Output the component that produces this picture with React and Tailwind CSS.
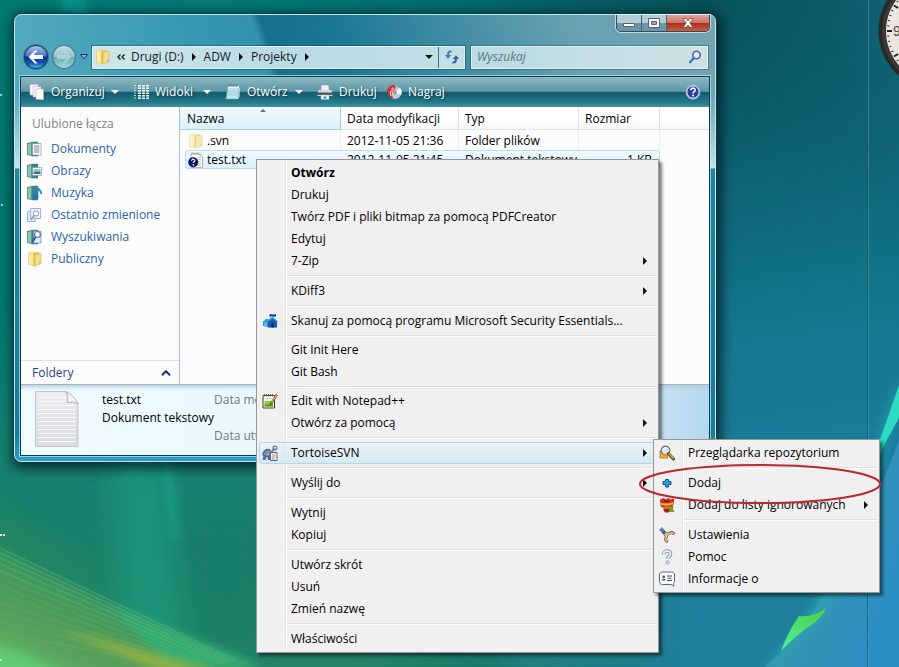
import React from "react";

function Wallpaper() {
  const rays = [0, 5, 10, 16, 23, 30, 38, 46, 55, 64, 74, 84];
  return (
    <svg
      className="absolute inset-0 h-full w-full"
      viewBox="0 0 899 667"
      preserveAspectRatio="xMidYMid slice"
      aria-hidden="true"
    >
      <defs>
        <linearGradient id="base" x1="0" y1="0" x2="1" y2="0">
          <stop offset="0" stopColor="#007a70" />
          <stop offset="0.25" stopColor="#007c78" />
          <stop offset="0.5" stopColor="#046d6c" />
          <stop offset="0.78" stopColor="#06525a" />
          <stop offset="0.92" stopColor="#0b5b6a" />
          <stop offset="1" stopColor="#146478" />
        </linearGradient>
        <linearGradient id="blueFade" gradientUnits="userSpaceOnUse" x1="700" y1="0" x2="790" y2="667">
          <stop offset="0" stopColor="#0a5a66" stopOpacity="0" />
          <stop offset="0.25" stopColor="#0e6575" stopOpacity="0.85" />
          <stop offset="0.5" stopColor="#14788f" />
          <stop offset="0.75" stopColor="#1d7f9e" />
          <stop offset="1" stopColor="#227f9c" />
        </linearGradient>
        <linearGradient id="lowLeft" x1="0" y1="0" x2="0" y2="1">
          <stop offset="0" stopColor="#138070" stopOpacity="0" />
          <stop offset="0.35" stopColor="#147f70" />
          <stop offset="1" stopColor="#248468" />
        </linearGradient>
        <linearGradient id="lowFade" x1="0" y1="0" x2="1" y2="0">
          <stop offset="0" stopColor="#fff" />
          <stop offset="0.5" stopColor="#fff" />
          <stop offset="1" stopColor="#000" />
        </linearGradient>
        <mask id="lowMask">
          <rect y="300" width="700" height="367" fill="url(#lowFade)" />
        </mask>
        <linearGradient id="hill" gradientUnits="userSpaceOnUse" x1="70" y1="560" x2="20" y2="667">
          <stop offset="0" stopColor="#2c9468" />
          <stop offset="0.4" stopColor="#4a9a5a" />
          <stop offset="0.75" stopColor="#5ba25c" />
          <stop offset="1" stopColor="#58bd68" />
        </linearGradient>
        <linearGradient id="corner" x1="0" y1="0" x2="1" y2="0.5">
          <stop offset="0" stopColor="#2391a8" />
          <stop offset="0.5" stopColor="#3a94b0" />
          <stop offset="1" stopColor="#2c8fc4" />
        </linearGradient>
        <linearGradient id="leaf" x1="0" y1="1" x2="0.6" y2="0">
          <stop offset="0" stopColor="#55f0a0" />
          <stop offset="1" stopColor="#4cd44c" />
        </linearGradient>
        <filter id="soft" filterUnits="userSpaceOnUse" x="-100" y="-100" width="1100" height="900">
          <feGaussianBlur stdDeviation="14" />
        </filter>
        <filter id="softer" filterUnits="userSpaceOnUse" x="-100" y="-100" width="1100" height="900">
          <feGaussianBlur stdDeviation="4" />
        </filter>
      </defs>
      <rect width="899" height="667" fill="url(#base)" />
      <rect x="560" width="339" height="667" fill="url(#blueFade)" />
      <rect x="500" y="430" width="160" height="300" fill="#1f7c94" filter="url(#soft)" />
      <rect y="300" width="700" height="367" fill="url(#lowLeft)" mask="url(#lowMask)" />
      <path d="M60 -10h24l6 40H64z" fill="#08a09a" opacity="0.6" filter="url(#softer)" />
      <path d="M110 440 L165 440 L185 667 L125 667Z" fill="#1fa386" opacity="0.55" filter="url(#soft)" />
      <path d="M162 440 L168 440 L178 540 L173 540Z" fill="#22b899" opacity="0.6" filter="url(#softer)" />
      <path d="M180 520 L260 520 L260 640 L200 640Z" fill="#167a68" opacity="0.6" filter="url(#soft)" />
      <path d="M-20 490 Q50 560 140 592 L-20 560Z" fill="#2a8a5a" opacity="0.6" filter="url(#soft)" />
      <path d="M-10 544 Q110 606 250 662 L265 680 L-10 680Z" fill="url(#hill)" filter="url(#softer)" />
      <path d="M110 606 Q180 634 262 667 L170 667Z" fill="#2fb57c" opacity="0.7" filter="url(#softer)" />
      {rays.map((d, i) => (
        <path
          key={d}
          d={`M0 ${548 + d} Q${110 - i * 2} ${600 + d * 0.6} ${235 - i * 3} ${660 + i}`}
          fill="none"
          stroke={i % 3 === 2 ? "#8ab963" : "#5cc48c"}
          strokeWidth="1"
          opacity={i < 5 ? 0.45 : 0.25}
        />
      ))}
      <path d="M60 630 Q150 650 215 672 L160 672Z" fill="#a8b83a" opacity="0.7" filter="url(#softer)" />
      <path d="M-10 645 Q40 655 70 680 L-10 680Z" fill="#66d074" opacity="0.7" filter="url(#softer)" />
      <path d="M899 440 Q840 600 765 667 L899 667Z" fill="url(#corner)" />
      <path d="M899 380 Q876 440 850 520 Q820 610 762 667 L780 667 Q850 600 872 510 Q880 455 899 412Z" fill="#27a3b4" opacity="0.6" filter="url(#softer)" />
      <path d="M899 385 L880 440 L876 462 Q886 440 899 418Z" fill="#2bdcc0" />
      <path d="M781 651 Q789 630 799 616 Q812 618 826 608 Q824 615 814 623 Q797 634 781 651Z" fill="url(#leaf)" />
      <path d="M867.5 0V667" stroke="#0b4f5c" opacity="0.6" />
      <path d="M868.5 0V667" stroke="#5aa6b4" opacity="0.5" />
      <circle cx="1" cy="95" r="1" fill="#d5e8e6" />
      <circle cx="2" cy="205" r="1" fill="#e8f4f3" />
      <path d="M0 535h5" stroke="#e8f4f3" strokeWidth="2" strokeDasharray="2 1" />
      <circle cx="1" cy="660" r="1" fill="#e8f4f3" />
    </svg>
  );
}

function ClockGadget() {
  const ticks = Array.from({ length: 60 }, (_, i) => i);
  return (
    <svg className="absolute top-0 right-0 h-24 w-6" viewBox="875 0 24 96" aria-label="Zegar">
      <circle cx="938" cy="31" r="60" fill="#0a3038" opacity="0.5" />
      <circle cx="938" cy="31" r="59" fill="#2a2725" />
      <circle cx="938" cy="31" r="56" fill="#3b3733" />
      <circle cx="938" cy="31" r="52" fill="#e9e7e0" />
      {ticks.map((i) => (
        <path
          key={i}
          d={i % 5 === 0 ? "M887 31h5" : "M887 31h2"}
          stroke="#222"
          strokeWidth={i % 5 === 0 ? 2 : 1}
          transform={`rotate(${i * 6} 938 31)`}
        />
      ))}
      <text x="893" y="36" fontSize="14" fontFamily="Liberation Sans, sans-serif" fill="#4a4a4a">
        9
      </text>
    </svg>
  );
}

/* ---------- small icons ---------- */

function FolderIcon({ pale }) {
  return (
    <svg className="size-4 shrink-0" viewBox="0 0 16 16" aria-hidden="true" opacity={pale ? 0.6 : 1}>
      <path d="M1.500 2 7 .8v14L1.500 13.500z" fill="#f9e795" stroke="#dcbf58" strokeWidth=".5" />
      <path d="M6.500 2 12 1v12l-5.500 2.200z" fill="#e3bd48" />
      <path d="M8 3 14 2.500v10L8 15.200z" fill="#f3dc84" stroke="#d3ae42" strokeWidth=".5" />
      <path d="M3 3.500v9" stroke="#fff6c8" strokeWidth="1.200" />
      <path d="M12.500 10.500l1.500 1-1.500 1.500z" fill="#7fa8cc" />
    </svg>
  );
}

function Cabinet({ children }) {
  return (
    <svg className="size-4 shrink-0" viewBox="0 0 16 16" aria-hidden="true">
      <path d="M0 2 5 .8v14.500L0 14z" fill="#5b9b8e" />
      <path d="M1 3l3-.6v11.500l-3-.7z" fill="#8cc2b0" />
      <path d="M5 .8h6v14.500H5z" fill="#3f7f86" />
      {children}
    </svg>
  );
}

const favouriteIcons = {
  docs: (
    <Cabinet>
      <path d="M5.500 2.500h8.500v11.500H5.500z" fill="#fff" stroke="#8194a8" strokeWidth=".7" />
      <path d="M7 5h5.500M7 7h5.500M7 9h5.500M7 11h5.500" stroke="#5c7391" strokeWidth=".9" />
    </Cabinet>
  ),
  pictures: (
    <Cabinet>
      <path d="M5.500 4.500h9v8h-9z" fill="#fff" stroke="#7d98a8" strokeWidth=".7" />
      <path d="M6.500 6h7v2.500h-7z" fill="#8fc8ec" />
      <path d="M6.500 8.500h7v2.500h-7z" fill="#2c7a86" />
    </Cabinet>
  ),
  music: (
    <Cabinet>
      <path d="M10.500 12V2.500c.8 2.500 4.300 2.500 3.800 6.500" fill="none" stroke="#1a86c8" strokeWidth="1.800" />
      <ellipse cx="8.500" cy="12.200" rx="2.900" ry="2.300" fill="#1a78be" />
    </Cabinet>
  ),
  recent: (
    <svg className="size-4 shrink-0" viewBox="0 0 16 16" aria-hidden="true">
      <path d="M.5 4.500h8v10h-8z" fill="#dbe6f8" stroke="#9fb6dc" />
      <path d="M3.500 1.500h10v10h-10z" fill="#eaf1fc" stroke="#9fb6dc" />
      <circle cx="9" cy="6.500" r="2.600" fill="#fff" stroke="#7f98ca" />
      <path d="M7.200 8.500 4 12.500" stroke="#7f98ca" strokeWidth="1.500" />
    </svg>
  ),
  searches: (
    <Cabinet>
      <path d="M6.500 2h7.500v12H6.500z" fill="#dfeaf6" stroke="#6a86a8" strokeWidth=".7" />
      <circle cx="10.500" cy="5.500" r="3" fill="#eef6ff" stroke="#5b7cac" strokeWidth="1.200" />
      <path d="M8.600 8 5.500 13" stroke="#34548a" strokeWidth="1.800" />
    </Cabinet>
  ),
  public: <FolderIcon />,
};

function TextFileIcon() {
  return (
    <svg className="size-4 shrink-0" viewBox="0 0 16 16" aria-hidden="true">
      <path d="M3 2h8l3.500 3v10.500H3z" fill="#fff" stroke="#98a0a8" strokeWidth=".8" />
      <path d="M4 .5v2M6 .5v2M8 .5v2M10 .5v2M12 1.500v2" stroke="#7c848c" strokeWidth=".8" />
      <path d="M9 5.500h4M9 7.500h4M10 9.500h3M10 11.500h3M9 13.500h4" stroke="#b4bac0" strokeWidth=".8" />
      <circle cx="5.200" cy="10.200" r="5" fill="#14146e" />
      <path d="M3.600 8.800c0-2.200 3.400-2 3.200 0-.1 1-1.500 1.100-1.500 2.300" fill="none" stroke="#fff" strokeWidth="1.200" />
      <circle cx="5.300" cy="12.900" r=".8" fill="#fff" />
    </svg>
  );
}

function OrganizeIcon() {
  return (
    <svg className="size-4 shrink-0" viewBox="0 0 16 16" aria-hidden="true">
      <path d="M1 .5h8v10.500H1z" fill="#fff" stroke="#b8bcc4" strokeWidth=".6" />
      <path d="M4 2.500h8v10.500H4z" fill="#f8f0f2" stroke="#b9a9b0" strokeWidth=".6" />
      <path d="M7 5h7.500v10.500H7z" fill="#fff" stroke="#b9a9b0" strokeWidth=".6" />
    </svg>
  );
}

function ViewsIcon() {
  return (
    <svg className="size-4 shrink-0" viewBox="0 0 16 16" aria-hidden="true">
      <path d="M2 1v14" stroke="#eef6f8" strokeWidth="1.500" strokeDasharray="1 1.500" />
      <path d="M6.500 1v14M10.500 1v14M14.500 1v14" stroke="#fff" strokeWidth="2.800" strokeDasharray="1.500 1" />
    </svg>
  );
}

function NotepadIcon() {
  return (
    <svg className="size-4 shrink-0" viewBox="0 0 16 16" aria-hidden="true">
      <path d="M3 2h11l-1 13H1z" fill="#bfe6ee" stroke="#6fa6b8" strokeWidth=".7" />
      <path d="M3 2h11v2H3z" fill="#f0fbfd" />
      <path d="M4 .5v2.500M6 .5v2.500M8 .5v2.500M10 .5v2.500M12 .5v2.500" stroke="#456c7a" strokeWidth=".8" />
      <path d="M3 7h9.500M3 9h9.500M2.500 11h9.500" stroke="#93c8d4" strokeWidth=".7" />
      <path d="M12 15l2-2 .3-9" fill="none" stroke="#fff" strokeWidth=".8" />
    </svg>
  );
}

function PrinterIcon() {
  return (
    <svg className="size-4 shrink-0" viewBox="0 0 16 16" aria-hidden="true">
      <path d="M4 1h8v6H4z" fill="#eef2f6" stroke="#8a96a2" strokeWidth=".6" />
      <path d="M1.500 6h13l1 6H.5z" fill="#d3dae0" />
      <path d="M1 8.500h14V11H1z" fill="#4e565f" />
      <path d="M4 11h8v4.500H4z" fill="#fff" stroke="#9aa4ae" strokeWidth=".6" />
      <path d="M6.500 12.500h3v2h-3z" fill="#3a80c0" />
    </svg>
  );
}

function BurnIcon() {
  return (
    <svg className="size-4 shrink-0" viewBox="0 0 16 16" aria-hidden="true">
      <circle cx="9" cy="8.500" r="6.500" fill="#c3cbd1" />
      <path d="M9 8.500 14 4a6.500 6.500 0 0 1 1 7z" fill="#f5f8fa" />
      <circle cx="9" cy="8.500" r="1.800" fill="#8b9ca8" />
      <path d="M7.500 14.500C-1 12 0 3 6 1.200c4.500-.8 4.500 3.800 1 5.600C5 8 5.500 11.500 7.500 14.500z" fill="#d8262c" />
      <path d="M5.500 4.500c1-1 2.500-.5 2 .6C7 6 5 6 4.500 8s0 3 1 4" fill="none" stroke="#fff" />
    </svg>
  );
}

function HelpIcon() {
  return (
    <svg className="size-4" viewBox="0 0 16 16" aria-hidden="true">
      <circle cx="8" cy="8" r="7.400" fill="#a9b6dc" />
      <circle cx="8" cy="8" r="6" fill="#2442a0" stroke="#e3e9f8" strokeWidth=".7" />
      <path d="M5.800 6.300c0-3 4.500-2.800 4.300 0-.1 1.400-2 1.500-2 3.200" fill="none" stroke="#fff" strokeWidth="1.600" />
      <circle cx="8.100" cy="11.600" r="1" fill="#fff" />
    </svg>
  );
}

function CaretDown({ className }) {
  return (
    <svg className={className} viewBox="0 0 8 4" aria-hidden="true">
      <path d="M0 0h8L4 4z" fill="currentColor" />
    </svg>
  );
}

function CaretRight() {
  return (
    <svg className="h-2 w-1 shrink-0" viewBox="0 0 4 8" aria-hidden="true">
      <path d="M0 0v8l4-4z" fill="#111" />
    </svg>
  );
}

/* ---------- menu icons ---------- */

const menuIcons = {
  security: (
    <svg className="size-4" viewBox="0 0 16 16" aria-hidden="true">
      <path d="M1 8.500 4.500 5.500 8 8v6.500L1 13z" fill="#2f94e4" />
      <path d="M6 7.500 10.500 4 15 8v6.500L6 14.500z" fill="#0f5cb0" />
      <path d="M5 7.500 10.500 3.500 15.500 8v1.500l-5-4L5.500 9z" fill="#3aa4ea" />
      <path d="M7.500 4V1.500c2-1.500 3 .8 6.500-.5v2.500c-3 1.200-4-1-5.500 0V4z" fill="#1d4c8c" />
      <path d="M9.500 14.500v-4h2.500v4z" fill="#092c66" />
      <path d="M2.500 9.500h2v3.500h-2z" fill="#68c6f6" />
    </svg>
  ),
  notepadpp: (
    <svg className="size-4" viewBox="0 0 16 16" aria-hidden="true">
      <path d="M1 2.500h11.500v12.500H1z" fill="#fdfdf4" stroke="#3c3c3c" />
      <path d="M2.500 1v2.500M4.500 1v2.500M6.500 1v2.500M8.500 1v2.500M10.500 1v2.500" stroke="#555" strokeWidth=".9" />
      <path d="M2.500 8h8.500v5.500H2.500z" fill="#8ad030" />
      <path d="M2.500 11.500h8.500v2H2.500z" fill="#4a9a1c" />
      <path d="M3 5.500h7" stroke="#b9b9a8" strokeWidth=".8" />
      <path d="M8.500 10 14 1.200l1.500 1L10 10.800z" fill="#eda43a" stroke="#6b4212" strokeWidth=".6" />
      <path d="M8.500 10l-.3 1.800 1.800-1z" fill="#222" />
    </svg>
  ),
  tortoise: (
    <svg className="size-4" viewBox="0 0 16 16" aria-hidden="true">
      <path d="M.8 9.500C1 3 9.500 2.500 11 9l-1 2.500H2z" fill="#56759f" stroke="#2d4468" strokeWidth=".8" />
      <path d="M3 5.800l3 1.200 3-1.200M6 7v4M1.500 9h9" stroke="#a4bedb" strokeWidth=".8" fill="none" />
      <path d="M10 8c.3-2 1-3 2-4" stroke="#6f87a6" strokeWidth="2.200" fill="none" />
      <circle cx="13" cy="3" r="2.200" fill="#8ba2be" stroke="#3c5270" strokeWidth=".6" />
      <circle cx="13.300" cy="2.600" r=".8" fill="#fff" />
      <path d="M2 11 .8 14.500h2.700l1-3.500M6 11.500v3h2v-3" fill="#5a7497" stroke="#35496a" strokeWidth=".5" />
      <path d="M8.500 7.500h6.500v8H8.500z" fill="#f6f4ee" stroke="#555" strokeWidth=".9" />
      <path d="M10 10h3.500M10 12h3.500M10 14h2.500" stroke="#777" strokeWidth=".8" />
    </svg>
  ),
  browse: (
    <svg className="size-4" viewBox="0 0 16 16" aria-hidden="true">
      <path d="M1 6h7.500v7H1z" fill="#f2b530" stroke="#9a6a10" strokeWidth=".7" />
      <circle cx="6.500" cy="5.500" r="4.300" fill="#d6e6fa" stroke="#66748a" strokeWidth="1.200" />
      <path d="M3.500 8.200h6L8 9.600H5z" fill="#f6c84c" />
      <path d="M4 5.500a2.500 2.500 0 0 1 3-2.500" stroke="#fff" strokeWidth="1.200" fill="none" />
      <path d="M9.500 8.500 14.500 14" stroke="#4e3408" strokeWidth="3" strokeLinecap="round" />
      <path d="M9.800 8.500 14.300 13.400" stroke="#e8b63c" strokeWidth="1.400" strokeLinecap="round" />
    </svg>
  ),
  add: (
    <svg className="size-4" viewBox="0 0 16 16" aria-hidden="true">
      <path d="M6.500 4.500h3v2h2.500v3H9.500v2.500h-3V9.500H4v-3h2.500z" fill="#32a0e0" stroke="#11568c" />
    </svg>
  ),
  ignore: (
    <svg className="size-4" viewBox="0 0 16 16" aria-hidden="true">
      <path d="M1 2.500 5 1l1.500 1.500L10 1l1 1.500 4-1v5.500l-1.500 1.500 1 2-3 1.500H6L2 9.500 1 7z" fill="#d42a1c" />
      <path d="M1 5.500c4 1.500 9 1.500 13.500-.5v2C10 9 5 9 1 7.500z" fill="#f9c03a" />
      <path d="M5 3.500h5v1.500H5z" fill="#7c120c" />
      <path d="M4 9.500h8v3H6z" fill="#e8701c" />
      <path d="M10 9.500h4v2.500l1.500 3H10z" fill="#6f9f2c" />
      <path d="M4 12h6v3.500H6z" fill="#b01c12" />
    </svg>
  ),
  settings: (
    <svg className="size-4" viewBox="0 0 16 16" aria-hidden="true">
      <path d="M1.500 1.500l4.500 5" stroke="#3d5784" strokeWidth="3.600" />
      <path d="M.5 3.500 3.500 .8M2.500 5 5 2.500" stroke="#b2c4e0" strokeWidth="1" />
      <path d="M5.500 6.500c2 1.500 2 3.500 1.300 5-.6 1.500.5 2.500 2.200 3.200M6 6.500c2 .8 3.500.5 5-.4 1.600-1 3.200-.4 4 1.400" fill="none" stroke="#6d5b38" strokeWidth="3" />
      <path d="M5.800 6.700c1.800 1.300 1.800 3.200 1.100 4.800-.5 1.200.4 2.200 1.800 2.800M6.300 6.600c1.800.8 3.300.5 4.800-.3 1.300-.8 2.700-.4 3.500.9" fill="none" stroke="#dfcda2" strokeWidth="1.500" />
    </svg>
  ),
  help: (
    <svg className="size-4" viewBox="0 0 16 16" aria-hidden="true">
      <path d="M4.500 5.500C4.500 .8 11.800 1 11.500 5c-.3 2.500-3 2.500-3 5" fill="none" stroke="#8090a8" strokeWidth="3.600" />
      <path d="M4.500 5.500C4.500 .8 11.800 1 11.500 5c-.3 2.500-3 2.500-3 5" fill="none" stroke="#e3ebf7" strokeWidth="2" />
      <circle cx="8.500" cy="13.500" r="1.600" fill="#e3ebf7" stroke="#8090a8" strokeWidth=".9" />
    </svg>
  ),
  about: (
    <svg className="size-4" viewBox="0 0 16 16" aria-hidden="true">
      <path d="M3.500 1h9c1.800 0 3 1.200 3 3v6.500c0 1-.5 1.700-1 2.200l.5 2.500L12 13.500H3.500c-1.800 0-3-1.200-3-3V4c0-1.800 1.200-3 3-3z" fill="#fbfcfd" stroke="#5b6673" />
      <path d="M2.800 9.500c0-2.500 3.800-2.500 3.800 0z" fill="#3f5068" />
      <circle cx="4.700" cy="5.800" r="1.300" fill="#3f5068" />
      <path d="M8 5h5M8.500 7.300h4M8 9.500h5" stroke="#3f4c5c" strokeWidth="1.100" />
    </svg>
  ),
};

/* ---------- context menus ---------- */

const mainMenu = [
  { label: "Otwórz", bold: true },
  { label: "Drukuj" },
  { label: "Twórz PDF i pliki bitmap za pomocą PDFCreator" },
  { label: "Edytuj" },
  { label: "7-Zip", sub: true },
  "line",
  { label: "KDiff3", sub: true },
  "line",
  { label: "Skanuj za pomocą programu Microsoft Security Essentials...", icon: "security" },
  "tight",
  { label: "Git Init Here" },
  { label: "Git Bash" },
  "tight",
  { label: "Edit with Notepad++", icon: "notepadpp" },
  { label: "Otwórz za pomocą", sub: true },
  "line",
  { label: "TortoiseSVN", icon: "tortoise", sub: true, active: true },
  "line",
  { label: "Wyślij do", sub: true },
  "line",
  { label: "Wytnij" },
  { label: "Kopiuj" },
  "line",
  { label: "Utwórz skrót" },
  { label: "Usuń" },
  { label: "Zmień nazwę" },
  "line",
  { label: "Właściwości" },
];

const svnMenu = [
  { label: "Przeglądarka repozytorium", icon: "browse" },
  "line",
  { label: "Dodaj", icon: "add" },
  { label: "Dodaj do listy ignorowanych", icon: "ignore", sub: true },
  "line",
  { label: "Ustawienia", icon: "settings" },
  { label: "Pomoc", icon: "help" },
  { label: "Informacje o", icon: "about" },
];

function Menu({ items, label, className }) {
  return (
    <div
      role="menu"
      aria-label={label}
      className={`absolute border border-[#979797] bg-[#f0f0f0] bg-[linear-gradient(90deg,transparent_28px,#e2e3e3_28px,#e2e3e3_29px,#fff_29px,#fff_30px,transparent_30px)] p-[2px] shadow-[3px_3px_3px_rgba(0,0,0,0.5)] ${className}`}
    >
      {items.map((item, i) =>
        typeof item === "string" ? (
          <div key={i} role="separator" className={`flex flex-col justify-center pl-7 ${item === "tight" ? "h-[7px]" : "h-2"}`}>
            <div className="h-[2px] border-t border-[#e0e0e0] bg-white" />
          </div>
        ) : (
          <button
            key={i}
            role="menuitem"
            type="button"
            className={`flex h-[22px] w-full items-center rounded-[3px] border pr-2 text-left ${
              item.active
                ? "border-[#aed9ea] bg-linear-to-b from-[#eaf3f8]/60 to-[#cfe9f5]/80"
                : "border-transparent"
            }`}
          >
            <span className="ml-[2px] flex w-[29px] shrink-0">{item.icon && menuIcons[item.icon]}</span>
            <span className={`grow whitespace-nowrap ${item.bold ? "font-bold" : ""}`}>{item.label}</span>
            {item.sub && <CaretRight />}
          </button>
        )
      )}
    </div>
  );
}

/* ---------- explorer window ---------- */

function CaptionButtons() {
  return (
    <div className="flex h-[17px] overflow-hidden rounded-b-[5px] border border-t-0 border-[#2b4f5e] shadow-[0_0_0_1px_rgba(255,255,255,0.6)]">
      <button type="button" aria-label="Minimalizuj" className="flex w-[25px] items-center justify-center border-r border-[#3c6474] bg-linear-to-b from-[#b4cdd5] from-50% to-[#6a98a6] to-50%">
        <svg className="h-3 w-4" viewBox="0 0 16 12" aria-hidden="true">
          <path d="M2.500 6.500h11v3h-11z" fill="#fff" stroke="#5b6570" />
        </svg>
      </button>
      <button type="button" aria-label="Maksymalizuj" className="flex w-[25px] items-center justify-center border-r border-[#3c6474] bg-linear-to-b from-[#b4cdd5] from-50% to-[#6a98a6] to-50%">
        <svg className="h-3 w-4" viewBox="0 0 16 12" aria-hidden="true">
          <path d="M2.500 1.500h11v9h-11z" fill="#fff" stroke="#5b6570" />
          <path d="M5.500 4.500h5v3h-5z" fill="#8fb0bb" stroke="#5b6570" />
        </svg>
      </button>
      <button type="button" aria-label="Zamknij" className="flex w-[42px] items-center justify-center bg-[linear-gradient(180deg,#dba59a_0%,#cf7263_48%,#a8301e_50%,#cc5a40_100%)]">
        <svg className="h-3 w-4" viewBox="0 0 16 12" aria-hidden="true">
          <path d="M3 1.500h3.200L8 4l1.800-2.500H13L9.800 6l3.200 4.500H9.800L8 8l-1.800 2.500H3L6.200 6z" fill="#fff" stroke="#6a4a4a" strokeWidth=".8" />
        </svg>
      </button>
    </div>
  );
}

function NavButtons() {
  return (
    <div className="flex items-center">
      <button type="button" aria-label="Wstecz">
        <svg className="size-7" viewBox="0 0 28 28" aria-hidden="true">
          <defs>
            <linearGradient id="back" x1="0" y1="0" x2="0" y2="1">
              <stop offset="0" stopColor="#b4c8ec" />
              <stop offset=".45" stopColor="#4a74c8" />
              <stop offset=".5" stopColor="#0c2f92" />
              <stop offset=".75" stopColor="#1650b4" />
              <stop offset="1" stopColor="#4cc4fa" />
            </linearGradient>
          </defs>
          <circle cx="14" cy="14" r="13" fill="#23526c" opacity=".5" />
          <circle cx="14" cy="14" r="11.500" fill="url(#back)" stroke="#1b2f66" />
          <path d="M13 7.500 6.500 14l6.500 6.500h2.500L11.500 16H21v-4h-9.500l4-4.500z" fill="#fff" />
        </svg>
      </button>
      <button type="button" aria-label="Dalej">
        <svg className="size-7" viewBox="0 0 28 28" aria-hidden="true">
          <defs>
            <linearGradient id="fwd" x1="0" y1="0" x2="0" y2="1">
              <stop offset="0" stopColor="#c4e0e6" />
              <stop offset=".48" stopColor="#94c2cc" />
              <stop offset=".5" stopColor="#66a8b4" />
              <stop offset="1" stopColor="#a4dae2" />
            </linearGradient>
          </defs>
          <circle cx="14" cy="14" r="11.500" fill="url(#fwd)" stroke="#44788a" strokeWidth="1.200" />
          <path d="M15 7.500l6.500 6.500-6.500 6.500h-2.500l4-4.500H7v-4h9.500l-4-4.500z" fill="#b4dade" opacity=".8" />
        </svg>
      </button>
      <button type="button" aria-label="Ostatnie strony" className="ml-[2px] w-2">
        <svg className="h-[6px] w-2" viewBox="0 0 8 6" aria-hidden="true">
          <path d="M.5 .5h7L4 5z" fill="#7fc0d4" stroke="#163a6c" />
        </svg>
      </button>
    </div>
  );
}

function AddressRow() {
  return (
    <div className="flex items-center px-[2px]">
      <NavButtons />
      <div className="ml-1 flex h-[23px] w-[373px] items-center border border-[#e2f2f5] bg-[linear-gradient(90deg,#cfe6ea,#b9dce5_50%,#c2dfe6)] pl-[2px] text-[#1a1a1a] shadow-[0_0_0_1px_rgba(20,70,90,0.5)]">
        <FolderIcon />
        <svg className="ml-[6px] h-[6px] w-2" viewBox="0 0 8 6" aria-hidden="true">
          <path d="M3.500 .5 1 3l2.500 2.500M7.500 .5 5 3l2.500 2.500" fill="none" stroke="#111" strokeWidth="1.300" />
        </svg>
        <button type="button" className="ml-[6px]">Drugi (D:)</button>
        <span className="mx-2"><CaretRight /></span>
        <button type="button">ADW</button>
        <span className="mx-2"><CaretRight /></span>
        <button type="button">Projekty</button>
        <span className="mx-2"><CaretRight /></span>
        <button type="button" aria-label="Poprzednie lokalizacje" className="ml-auto flex h-full w-5 items-center justify-center border-r border-[#3f7488]">
          <CaretDown className="h-1 w-2" />
        </button>
        <button type="button" aria-label="Odśwież" className="flex w-[25px] justify-center">
          <svg className="size-4" viewBox="0 0 16 16" aria-hidden="true">
            <path d="M7.500 2.500C5 2 4 3.500 4 6.500" fill="none" stroke="#3f7cc0" strokeWidth="2" />
            <path d="M.8 6h6.400L4 9.800z" fill="#3f7cc0" />
            <path d="M8.500 13.500c2.500.5 3.500-1 3.500-4" fill="none" stroke="#2f5c9c" strokeWidth="2" />
            <path d="M8.800 10h6.400L12 6.200z" fill="#2f5c9c" />
          </svg>
        </button>
      </div>
      <label className="ml-[6px] flex h-[23px] min-w-0 grow items-center border border-[#e2f2f5] bg-[linear-gradient(90deg,#b9dce3,#cfe0e5)] px-[5px] shadow-[0_0_0_1px_rgba(20,70,90,0.4)]">
        <input type="text" aria-label="Wyszukaj" placeholder="Wyszukaj" className="min-w-0 grow bg-transparent italic outline-none placeholder:text-[#62757c]" />
        <svg className="size-[14px] shrink-0" viewBox="0 0 14 14" aria-hidden="true">
          <circle cx="8.500" cy="5" r="3.700" fill="#e2eef2" stroke="#3c66a0" strokeWidth="1.500" />
          <path d="M5.800 8 1.500 12.800" stroke="#3c66a0" strokeWidth="2" />
        </svg>
      </label>
    </div>
  );
}

function ToolButton({ icon, label, caret, className }) {
  return (
    <button type="button" className={`flex items-center gap-[6px] ${className}`}>
      {icon}
      <span className="[text-shadow:1px_1px_2px_#0a3444]">{label}</span>
      {caret && <CaretDown className="ml-auto h-1 w-2" />}
    </button>
  );
}

function Toolbar() {
  return (
    <div className="flex h-[30px] items-center bg-[linear-gradient(180deg,#8fbac2_0%,#5b97a4_48%,#145a70_50%,#257a88_85%,#3f97a2_100%)] px-2 pb-px text-white">
      <ToolButton icon={<OrganizeIcon />} label="Organizuj" caret className="mr-[14px] w-[90px]" />
      <ToolButton icon={<ViewsIcon />} label="Widoki" caret className="mr-[14px] w-[78px]" />
      <ToolButton icon={<NotepadIcon />} label="Otwórz" caret className="mr-[14px] w-[78px]" />
      <ToolButton icon={<PrinterIcon />} label="Drukuj" className="w-[69px]" />
      <ToolButton icon={<BurnIcon />} label="Nagraj" />
      <button type="button" aria-label="Pomoc" className="ml-auto"><HelpIcon /></button>
    </div>
  );
}

const favourites = [
  ["docs", "Dokumenty"],
  ["pictures", "Obrazy"],
  ["music", "Muzyka"],
  ["recent", "Ostatnio zmienione"],
  ["searches", "Wyszukiwania"],
  ["public", "Publiczny"],
];

function Sidebar() {
  return (
    <nav className="flex w-[159px] shrink-0 flex-col border-r border-[#a9bccb]">
      <h2 className="mt-[6px] mb-[3px] pl-[11px] leading-[22px] text-[#838383]">Ulubione łącza</h2>
      <ul>
        {favourites.map(([icon, label]) => (
          <li key={label}>
            <a href="#" className="flex h-[22px] items-center gap-2 pl-[6px] whitespace-nowrap text-[#2a64a8]">
              {favouriteIcons[icon]}
              {label}
            </a>
          </li>
        ))}
      </ul>
      <button type="button" className="mt-auto flex h-6 items-center justify-between border-t border-[#dde5ea] pr-2 pl-[11px] text-[#1e3c8c]">
        Foldery
        <svg className="h-[6px] w-[10px]" viewBox="0 0 10 6" aria-hidden="true">
          <path d="M1 5.200 5 1.200l4 4" fill="none" stroke="#1b3270" strokeWidth="2" />
        </svg>
      </button>
    </nav>
  );
}

function FileList() {
  return (
    <div className="min-w-0 grow">
      <table className="w-full table-fixed border-separate border-spacing-0 text-left whitespace-nowrap">
        <colgroup>
          <col className="w-[161px]" />
          <col className="w-[118px]" />
          <col className="w-[120px]" />
          <col className="w-[81px]" />
          <col />
        </colgroup>
        <thead>
          <tr className="h-[23px] bg-linear-to-b from-white from-50% to-[#f5f6f8]">
            <th className="relative border-r border-b border-[#9fd5ea] bg-linear-to-b from-[#f3fafd] to-[#dbeff8] px-[7px] pt-[2px] pb-0 font-normal">
              Nazwa
              <svg className="absolute top-[2px] left-1/2 h-[3px] w-[6px]" viewBox="0 0 6 3" aria-hidden="true">
                <path d="M0 3 3 0l3 3z" fill="#4b7f98" />
              </svg>
            </th>
            <th className="border-r border-b border-[#dfe3e7] px-[6px] pt-[2px] pb-0 font-normal">Data modyfikacji</th>
            <th className="border-r border-b border-[#dfe3e7] px-[6px] pt-[2px] pb-0 font-normal">Typ</th>
            <th className="border-r border-b border-[#dfe3e7] px-[6px] pt-[2px] pb-0 font-normal">Rozmiar</th>
            <th aria-label="Wolne miejsce" className="border-b border-[#dfe3e7]" />
          </tr>
        </thead>
        <tbody>
          <tr className="h-[20px]">
            <td className="border-r border-[#e6eff3] pt-[2px] pl-2">
              <span className="flex items-center gap-[3px]"><FolderIcon pale />.svn</span>
            </td>
            <td className="border-r border-[#e6eff3] px-[6px] pt-[2px]">2012-11-05 21:36</td>
            <td className="border-r border-[#e6eff3] px-[6px] pt-[2px]">Folder plików</td>
            <td className="border-r border-[#e6eff3]" />
            <td />
          </tr>
          <tr className="h-[19px]">
            <td className="p-0 pl-[5px]">
              <span className="flex h-[19px] items-center gap-[3px] rounded-l-[3px] border border-r-0 border-[#b9e0ee] bg-linear-to-b from-[#f1fafd] to-[#dcf1f9] pl-[2px]">
                <TextFileIcon />test.txt
              </span>
            </td>
            <td className="border-y border-[#b9e0ee] bg-linear-to-b from-[#f1fafd] to-[#dcf1f9] px-[6px] py-0">2012-11-05 21:45</td>
            <td className="border-y border-[#b9e0ee] bg-linear-to-b from-[#f1fafd] to-[#dcf1f9] px-[6px] py-0">Dokument tekstowy</td>
            <td className="rounded-r-[3px] border-y border-r border-[#b9e0ee] bg-linear-to-b from-[#f1fafd] to-[#dcf1f9] px-[7px] py-0 text-right">1 KB</td>
            <td />
          </tr>
        </tbody>
      </table>
    </div>
  );
}

function DetailsPane() {
  return (
    <div className="flex h-[71px] border-t border-[#9fb4c4] bg-[linear-gradient(90deg,#f0fbfd_0%,#e9f8fc_35%,#c4dff3_94%,#b4d8ee_100%)] pt-[6px] pl-[14px] leading-[18px] shadow-[inset_0_4px_4px_-2px_#b4ccd8]">
      <svg className="h-14 w-11" viewBox="0 0 44 56" aria-hidden="true">
        <defs>
          <linearGradient id="page" x1="0" y1="0" x2="0" y2="1">
            <stop offset="0" stopColor="#ececee" />
            <stop offset="1" stopColor="#dadbe1" />
          </linearGradient>
        </defs>
        <path d="M.5 .5H31Q35 8 43 12v43.500H.5z" fill="url(#page)" stroke="#c4c6cc" />
        <path d="M3 6.500h28M3 10.500h28M3 14.500h37M3 18.500h37M3 22.500h37M3 26.500h37M3 30.500h37M3 34.500h37M3 38.500h37M3 42.500h37M3 46.500h37M3 50.500h37" stroke="#f8f8fa" />
        <path d="M31 .5Q34 5 32.500 11.500 38 9.500 43 13 40 5 31 .5z" fill="#f6f6f8" stroke="#b0b2ba" />
      </svg>
      <div className="ml-[23px] w-[112px]">
        <p>test.txt</p>
        <p className="whitespace-nowrap">Dokument tekstowy</p>
      </div>
      <div className="w-[94px] text-right whitespace-nowrap text-[#6d7c86]">
        <p>Data modyfikacji:</p>
        <p className="mt-[18px]">Data utworzenia:</p>
      </div>
    </div>
  );
}

function ExplorerWindow() {
  return (
    <section
      aria-label="Projekty"
      className="absolute top-[14px] left-[14px] w-[702px] rounded-[7px] border border-[#bfe6ee] bg-[linear-gradient(180deg,transparent_80px,rgba(225,245,250,0.75)_153px,#1f869e_154px,#1a7c9c_420px,#2ba0c4_100%),linear-gradient(72deg,#6db4c3_0%,#4ba5ba_22%,#3797b2_38%,#3593b0_45%,#17708f_46%,#1a7795_54%,#3b8aa3_66%,#66a0b0_82%,#74a5b3_100%)] px-[5px] pb-[5px] shadow-[0_0_0_1px_#0b3b44,2px_3px_12px_4px_rgba(0,20,25,0.7)]"
    >
      <div className="flex h-[28px] justify-end"><CaptionButtons /></div>
      <AddressRow />
      <div className="mt-[5px] border border-[#0c3c50] shadow-[0_0_0_1px_rgba(190,235,245,0.7)]">
        <Toolbar />
        <div className="flex h-[277px] bg-[#fcfcfc]">
          <Sidebar />
          <FileList />
        </div>
        <DetailsPane />
      </div>
    </section>
  );
}

export default function App() {
  return (
    <main className="relative h-screen w-full overflow-hidden bg-[#007a72] font-['Open_Sans','Noto_Sans',sans-serif] text-[12px] leading-[16px] text-black">
      <Wallpaper />
      <ClockGadget />
      <ExplorerWindow />
      <Menu items={mainMenu} label="test.txt" className="top-[159px] left-[256px] w-[403px]" />
      <Menu items={svnMenu} label="TortoiseSVN" className="top-[439px] left-[653px] w-[227px]" />
      <svg className="pointer-events-none absolute top-[463px] left-[638px] h-[42px] w-[244px]" viewBox="0 0 244 42" aria-hidden="true">
        <ellipse cx="122" cy="21" rx="120" ry="19" fill="none" stroke="#b82a30" strokeWidth="2" />
      </svg>
    </main>
  );
}
